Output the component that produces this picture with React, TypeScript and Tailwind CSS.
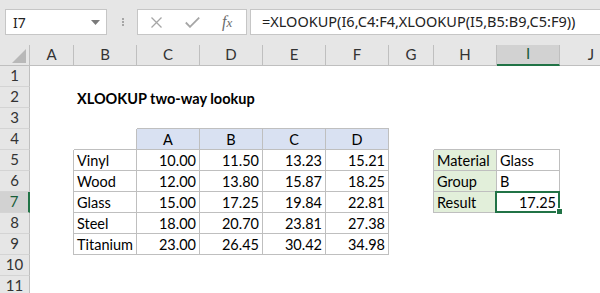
import React from 'react';
import clsx from 'clsx';

const COLS = ['A', 'B', 'C', 'D', 'E', 'F', 'G', 'H', 'I', 'J'];
const ROWS = [1, 2, 3, 4, 5, 6, 7, 8, 9, 10, 11];

const materials: [string, string[]][] = [
  ['Vinyl', ['10.00', '11.50', '13.23', '15.21']],
  ['Wood', ['12.00', '13.80', '15.87', '18.25']],
  ['Glass', ['15.00', '17.25', '19.84', '22.81']],
  ['Steel', ['18.00', '20.70', '23.81', '27.38']],
  ['Titanium', ['23.00', '26.45', '30.42', '34.98']],
];

const lookup: Record<number, [string, string]> = {
  5: ['Material', 'Glass'],
  6: ['Group', 'B'],
  7: ['Result', '17.25'],
};

function valueAt(r: number, c: string): { v: string; right?: boolean; center?: boolean } {
  if (r === 2 && c === 'B') return { v: 'XLOOKUP two-way lookup' };
  if (r === 4 && 'CDEF'.includes(c)) return { v: 'ABCD'['CDEF'.indexOf(c)], center: true };
  if (r >= 5 && r <= 9) {
    const [name, vals] = materials[r - 5];
    if (c === 'B') return { v: name };
    if ('CDEF'.includes(c)) return { v: vals['CDEF'.indexOf(c)], right: true };
  }
  if (lookup[r]) {
    if (c === 'H') return { v: lookup[r][0] };
    if (c === 'I') return { v: lookup[r][1], right: r === 7 };
  }
  return { v: '' };
}

// borders sit on the gridlines, so the cell left of / above a table edge draws them
function borders(r: number, c: string) {
  const main = r >= 5 && r <= 9 && 'BCDEF'.includes(c);
  const head = r === 4 && 'CDEF'.includes(c);
  const look = r >= 5 && r <= 7 && (c === 'H' || c === 'I');
  const right = main || head || look || (r === 4 && c === 'B') || (r >= 5 && r <= 9 && c === 'A') || (r >= 5 && r <= 7 && c === 'G');
  const bottom = main || head || look || (r === 4 && c === 'B') || (r === 3 && 'CDEF'.includes(c)) || (r === 4 && (c === 'H' || c === 'I'));
  return { right, bottom, head, look: look && c === 'H' };
}

function Cell({ r, c }: { r: number; c: string }) {
  const { v, right, center } = valueAt(r, c);
  const b = borders(r, c);
  const selected = r === 7 && c === 'I';
  return (
    <div
      className={clsx(
        'relative flex items-end h-[21px] pb-[1px] text-[14.5px] leading-[17px] text-black whitespace-nowrap',
        b.right && 'border-r border-[#bfbfbf]',
        b.bottom && 'border-b border-[#bfbfbf]',
        b.head && 'bg-[#d9e1f2]',
        b.look && 'bg-[#e2efda]',
        right && 'justify-end pr-[3px]',
        center && 'justify-center',
        !right && !center && 'pl-[3px]',
        r === 2 && c === 'B' && 'font-bold z-10'
      )}
    >
      {v}
      {selected && (
        <>
          <div className="absolute -left-[2px] -top-[1px] -right-[1px] -bottom-[1px] border-2 border-[#217346]" />
          <div className="absolute -right-[4px] -bottom-[3px] w-[7px] h-[7px] bg-[#217346] border border-white" />
        </>
      )}
    </div>
  );
}

function Toolbar() {
  return (
    <div className="h-[45px] bg-[#e6e6e6] flex items-start pt-[9px] pl-[5px] font-['Noto_Sans',sans-serif]">
      <div className="w-[102px] h-[26px] bg-white border border-[#c6c6c6] flex items-center justify-between pl-[7px] pr-[6px] text-[14px] text-[#222]">
        <span>I7</span>
        <svg width="9" height="5" viewBox="0 0 9 5">
          <path d="M0 0h9L4.5 5z" fill="#7a7a7a" />
        </svg>
      </div>
      <div className="ml-[15px] mt-[9px] flex flex-col gap-[1px]">
        <span className="w-[2px] h-[2px] bg-[#a6a6a6]" />
        <span className="w-[2px] h-[2px] bg-[#a6a6a6]" />
        <span className="w-[2px] h-[2px] bg-[#a6a6a6]" />
      </div>
      <div className="ml-[13px] w-[110px] h-[26px] bg-white border border-[#c6c6c6] flex items-center pl-[13px]">
        <svg width="11" height="11" viewBox="0 0 11 11">
          <path d="M0.5 0.5l10 10M10.5 0.5l-10 10" stroke="#a6a6a6" strokeWidth="1.3" />
        </svg>
        <svg className="ml-[23px]" width="15" height="11" viewBox="0 0 15 11">
          <path d="M0.8 5.5l4.2 4.3L14.2 0.6" stroke="#a6a6a6" strokeWidth="1.8" fill="none" />
        </svg>
        <span className="ml-[22px] font-['Liberation_Serif',serif] italic text-[16px] leading-none text-[#6b6b6b]">
          f<span className="text-[13px]">x</span>
        </span>
      </div>
      <div className="ml-[3px] flex-1 -mr-[5px] h-[26px] bg-white border border-[#c6c6c6] flex items-center pl-[11px] text-[14.5px] text-[#222] whitespace-nowrap">
        =XLOOKUP(I6,C4:F4,XLOOKUP(I5,B5:B9,C5:F9))
      </div>
    </div>
  );
}

export default function App() {
  return (
    <div className="w-[600px] h-[293px] overflow-hidden bg-white">
      <Toolbar />
      <div className="grid grid-cols-[30px_44px_63px_63px_63px_63px_63px_45px_63px_63px_63px] auto-rows-[21px] font-['Lato',sans-serif]">
        <div className="relative bg-[#e6e6e6] border-r border-b border-[#bfbfbf]">
          <svg className="absolute right-[3px] bottom-[2px]" width="14" height="14" viewBox="0 0 14 14">
            <path d="M14 0V14H0z" fill="#b8b8b8" />
          </svg>
        </div>
        {COLS.map((c) => (
          <div
            key={c}
            className={clsx(
              'flex items-end justify-center pb-[2px] text-[15px] leading-[17px] border-r',
              c === 'I'
                ? 'bg-[#d2d2d2] border-b-2 border-b-[#217346] border-r-[#bfbfbf] text-[#185c37]'
                : 'bg-[#e6e6e6] border-b border-[#bfbfbf] text-[#333]'
            )}
          >
            {c}
          </div>
        ))}
        {ROWS.map((r) => (
          <React.Fragment key={r}>
            <div
              className={clsx(
                'flex items-end justify-center pb-[2px] text-[15px] leading-[17px] border-b',
                r === 7
                  ? 'bg-[#d2d2d2] border-r-2 border-r-[#217346] border-b-[#d4d4d4] text-[#185c37]'
                  : 'bg-[#e6e6e6] border-r border-r-[#bfbfbf] border-b-[#d4d4d4] text-[#333]'
              )}
            >
              {r}
            </div>
            {COLS.map((c) => (
              <Cell key={c} r={r} c={c} />
            ))}
          </React.Fragment>
        ))}
      </div>
    </div>
  );
}
